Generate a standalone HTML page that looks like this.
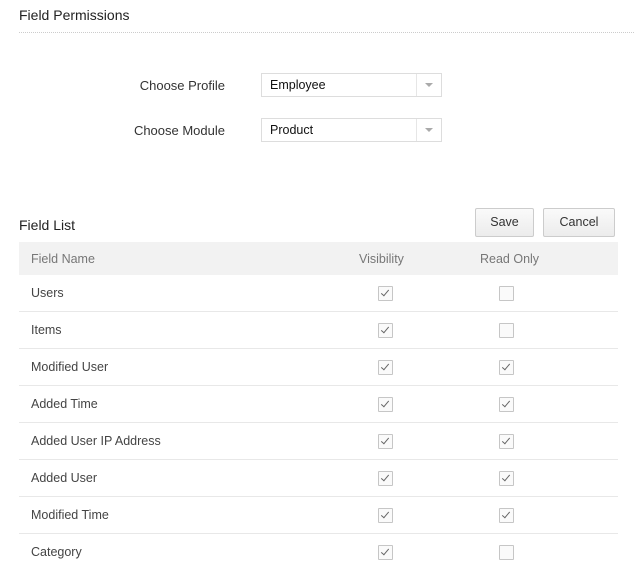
<!DOCTYPE html>
<html><head><style>
body{margin:0;width:634px;height:564px;overflow:hidden;background:#fff;font-family:"Liberation Sans",Arial,sans-serif;color:#333;position:relative}
.a{position:absolute}
.title{left:19px;top:7px;font-size:14px;color:#222}
.dot{left:19px;top:32px;width:615px;border-top:1px dotted #ccc}
.lbl{font-size:13px;color:#333;text-align:right;width:200px;left:25px}
.sel{left:261px;width:179px;height:22px;border:1px solid #ddd;font-size:12.5px;line-height:22px;color:#111}
.sel span{padding-left:8px}
.sel i{position:absolute;right:0;top:0;width:24px;height:22px;border-left:1px solid #e6e6e6}
.sel i:after{content:"";position:absolute;left:8px;top:9px;border-left:4px solid transparent;border-right:4px solid transparent;border-top:4px solid #aaa}
.btn{top:208px;height:27px;border:1px solid #ccc;border-radius:2px;background:linear-gradient(#fafafa,#ececec);font-size:12.5px;line-height:27px;text-align:center;color:#333}
.cb{display:inline-block;width:13px;height:13px;border:1px solid #c6c6c6;background:#fafafa;border-radius:1px}
.cb.k:after{content:"";position:absolute;left:4px;top:1px;width:3px;height:7px;border:solid #666;border-width:0 1.5px 1.5px 0;transform:rotate(40deg)}
.r{position:relative;height:37px;border-bottom:1px solid #e8e8e8;box-sizing:border-box}
.r .t{position:absolute;left:12px;top:11px;font-size:12.5px;color:#444}
</style></head><body>
<div class="a title">Field Permissions</div>
<div class="a dot"></div>
<div class="a lbl" style="top:78px">Choose Profile</div>
<div class="a sel" style="top:73px"><span>Employee</span><i></i></div>
<div class="a lbl" style="top:123px">Choose Module</div>
<div class="a sel" style="top:118px"><span>Product</span><i></i></div>
<div class="a" style="left:19px;top:217px;font-size:14px;color:#222">Field List</div>
<div class="a btn" style="left:475px;width:57px">Save</div>
<div class="a btn" style="left:543px;width:70px">Cancel</div>
<div class="a" style="left:19px;top:242px;width:599px;height:33px;background:#f2f2f2"></div>
<div class="a" style="left:31px;top:252px;font-size:12.5px;color:#777">Field Name</div>
<div class="a" style="left:359px;top:252px;font-size:12.5px;color:#777">Visibility</div>
<div class="a" style="left:480px;top:252px;font-size:12.5px;color:#777">Read Only</div>
<div class="a" style="left:19px;top:275px;width:599px">
<div class="r"><span class="t">Users</span><span class="a cb k" style="left:359px;top:11px"></span><span class="a cb" style="left:480px;top:11px"></span></div>
<div class="r"><span class="t">Items</span><span class="a cb k" style="left:359px;top:11px"></span><span class="a cb" style="left:480px;top:11px"></span></div>
<div class="r"><span class="t">Modified User</span><span class="a cb k" style="left:359px;top:11px"></span><span class="a cb k" style="left:480px;top:11px"></span></div>
<div class="r"><span class="t">Added Time</span><span class="a cb k" style="left:359px;top:11px"></span><span class="a cb k" style="left:480px;top:11px"></span></div>
<div class="r"><span class="t">Added User IP Address</span><span class="a cb k" style="left:359px;top:11px"></span><span class="a cb k" style="left:480px;top:11px"></span></div>
<div class="r"><span class="t">Added User</span><span class="a cb k" style="left:359px;top:11px"></span><span class="a cb k" style="left:480px;top:11px"></span></div>
<div class="r"><span class="t">Modified Time</span><span class="a cb k" style="left:359px;top:11px"></span><span class="a cb k" style="left:480px;top:11px"></span></div>
<div class="r" style="border:none"><span class="t">Category</span><span class="a cb k" style="left:359px;top:11px"></span><span class="a cb" style="left:480px;top:11px"></span></div>
</div>
</body></html>
